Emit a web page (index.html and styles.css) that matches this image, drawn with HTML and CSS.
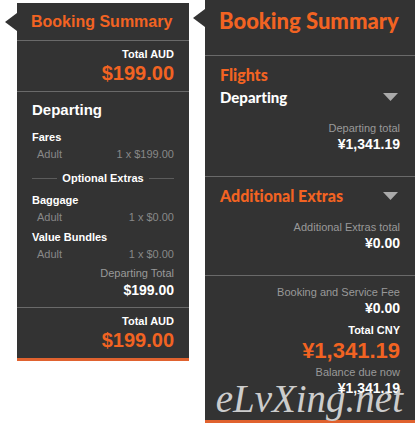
FILE: index.html
```html
<!DOCTYPE html>
<html lang="en">
<head>
    <meta charset="UTF-8">
    <meta name="viewport" content="width=device-width, initial-scale=1.0">
    <title>Booking Summary</title>
    <link rel="stylesheet" href="styles.css">
</head>
<body>
    <main class="page">
        <section class="panel panel-small">
            <h1 class="panel-title">Booking Summary</h1>
            <div class="total">
                <p class="label">Total AUD</p>
                <p class="price">$199.00</p>
            </div>
            <div class="details">
                <h2>Departing</h2>
                <h3>Fares</h3>
                <p class="item"><span>Adult</span><span>1 x $199.00</span></p>
                <p class="divider">Optional Extras</p>
                <h3>Baggage</h3>
                <p class="item"><span>Adult</span><span>1 x $0.00</span></p>
                <h3>Value Bundles</h3>
                <p class="item"><span>Adult</span><span>1 x $0.00</span></p>
                <p class="note">Departing Total</p>
                <p class="amount">$199.00</p>
            </div>
            <div class="total">
                <p class="label">Total AUD</p>
                <p class="price">$199.00</p>
            </div>
        </section>

        <section class="panel panel-large">
            <h1 class="panel-title">Booking Summary</h1>
            <div class="block">
                <h2>Flights</h2>
                <div class="block-head">
                    <h3>Departing</h3>
                    <button type="button" class="toggle" aria-label="Toggle departing"></button>
                </div>
                <p class="note">Departing total</p>
                <p class="amount">¥1,341.19</p>
            </div>
            <div class="block">
                <div class="block-head">
                    <h2>Additional Extras</h2>
                    <button type="button" class="toggle" aria-label="Toggle additional extras"></button>
                </div>
                <p class="note">Additional Extras total</p>
                <p class="amount">¥0.00</p>
            </div>
            <div class="summary">
                <p class="note">Booking and Service Fee</p>
                <p class="amount">¥0.00</p>
                <p class="label">Total CNY</p>
                <p class="price">¥1,341.19</p>
                <p class="note">Balance due now</p>
                <p class="amount">¥1,341.19</p>
            </div>
            <span class="watermark">eLvXing.net</span>
        </section>
    </main>
</body>
</html>
```

FILE: styles.css
```css
body {
    margin: 0;
    background-color: #fff;
    font-family: "Liberation Sans", Arial, sans-serif;
    font-size: 11px;
    color: #fff;
}

h1, h2, h3, p {
    margin: 0;
}

.page {
    display: grid;
    grid-template-columns: minmax(0, 172fr) minmax(0, 210fr);
    gap: 16px;
    align-items: start;
    padding: 0 3px 0 17px;
}

.panel {
    position: relative;
    background-color: #333;
    border-bottom: 3px solid #e0622f;
}

/* pointer on the left edge */
.panel::before {
    content: "";
    position: absolute;
    top: 10px;
    left: -12px;
    border: solid transparent;
    border-width: 9px 12px 9px 0;
    border-right-color: #333;
}

.panel-title {
    color: #f26322;
    border-bottom: 1px solid #6a6a6a;
    white-space: nowrap;
}

.label,
.note,
.amount,
.price {
    text-align: right;
    line-height: 16px;
}

.label,
.amount,
.price {
    font-weight: bold;
}

.note {
    color: #999;
}

.amount {
    font-size: 14px;
}

.price {
    color: #f26322;
}

/* small panel */
.panel-small {
    margin-top: 3px;
}

.panel-small .panel-title {
    padding: 0 14px;
    font-size: 16px;
    line-height: 37px;
}

.total {
    padding: 6px 15px;
}

.total .label {
    line-height: 14px;
}

.total .price {
    font-size: 20px;
    line-height: 24px;
}

.details {
    padding: 8px 15px;
    border: solid #6a6a6a;
    border-width: 1px 0;
}

.details h2 {
    margin-bottom: 8px;
    font-size: 15px;
    line-height: 20px;
}

.details h3 {
    font-size: 11px;
    line-height: 18px;
}

.details .amount {
    line-height: 18px;
}

.item {
    display: flex;
    justify-content: space-between;
    padding-left: 5px;
    margin-bottom: 3px;
    color: #888;
    line-height: 16px;
}

.divider {
    display: flex;
    align-items: center;
    gap: 5px;
    margin: 6px 0 3px;
    font-weight: bold;
    line-height: 20px;
    white-space: nowrap;
}

.divider::before,
.divider::after {
    content: "";
    flex: 1;
    border-top: 1px solid #5c5c5c;
}

/* large panel */
.panel-large .panel-title,
.panel-large h2,
.panel-large h3 {
    font-family: Lato, "Liberation Sans", sans-serif;
    font-weight: 900;
    font-variant-ligatures: none;
}

.panel-large .panel-title {
    padding: 0 14px 13px;
    font-size: 22px;
    line-height: 42px;
}

.panel-large::before {
    top: 9px;
}

.block {
    padding: 8px 15px 24px;
    border-bottom: 1px solid #6a6a6a;
}

.panel-large h2,
.panel-large h3 {
    font-size: 16px;
    line-height: 22px;
}

.panel-large h3 {
    font-size: 15px;
}

.panel-large h2 {
    color: #f26322;
}

.block-head {
    display: flex;
    justify-content: space-between;
    align-items: center;
    margin-bottom: 12px;
}

.toggle {
    width: 15px;
    height: 8px;
    margin-right: 2px;
    padding: 0;
    border: none;
    background-color: #aaa;
    clip-path: polygon(0 0, 100% 0, 50% 100%);
    cursor: pointer;
}

.summary {
    padding: 8px 15px 24px;
}

.summary .label {
    margin-top: 6px;
}

.summary .price {
    font-size: 22px;
    line-height: 26px;
}

.watermark {
    position: absolute;
    right: 12px;
    bottom: 3px;
    color: #ccc;
    font-family: "Brush Script MT", "Liberation Serif", serif;
    font-size: 39px;
    font-style: italic;
    line-height: 36px;
    pointer-events: none;
}
```
